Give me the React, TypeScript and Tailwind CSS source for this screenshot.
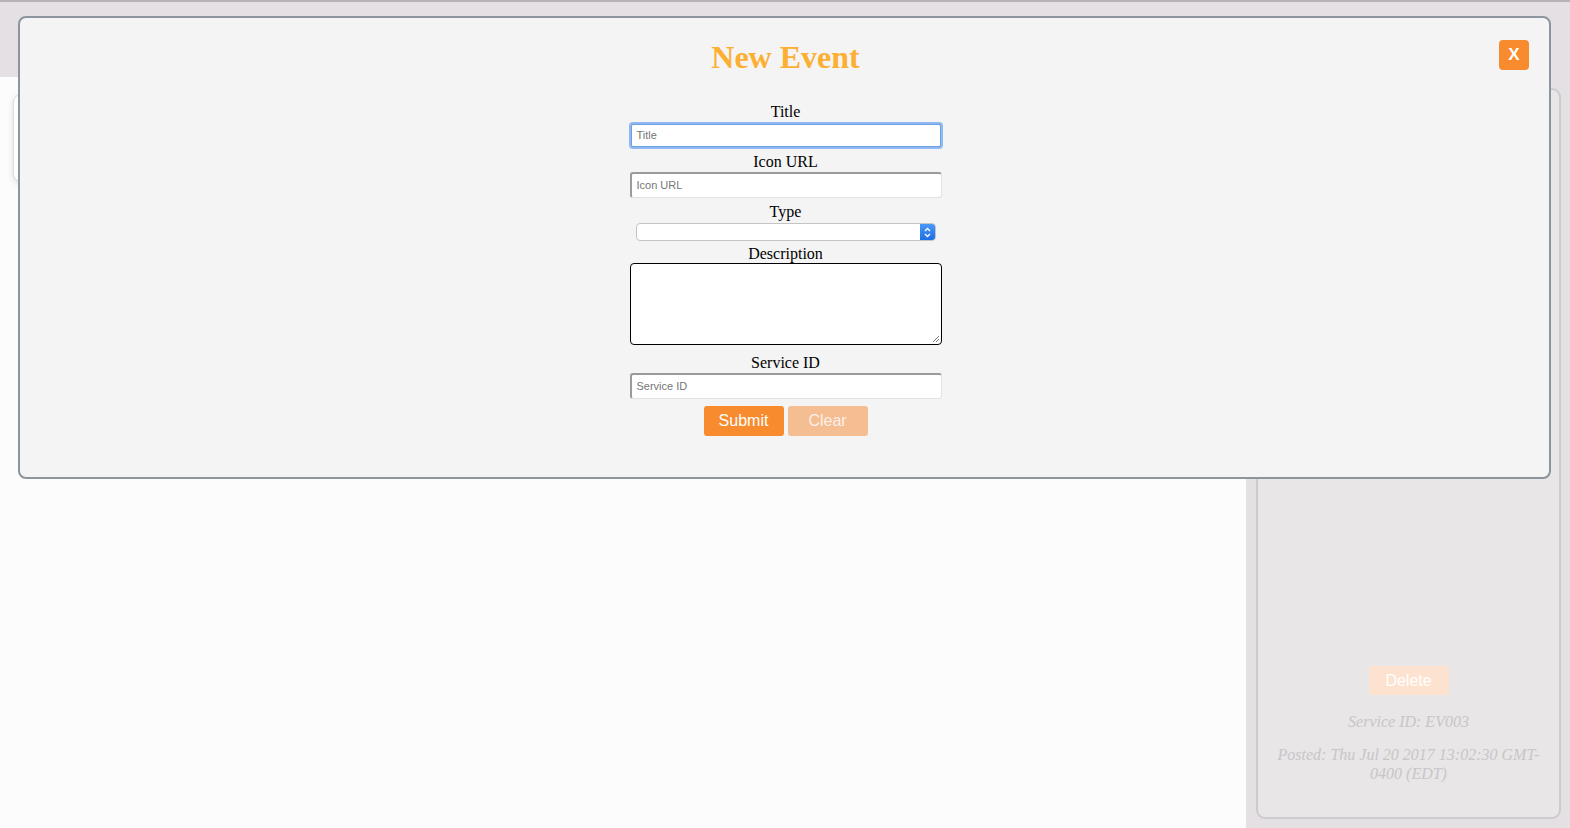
import React from "react";

const serif = { fontFamily: '"Liberation Serif", "Times New Roman", serif' };

function TextInput({ placeholder, focused }: { placeholder: string; focused?: boolean }) {
  if (focused) {
    return (
      <div className="w-[314px] h-[27px] rounded-[4px] p-[2px] bg-[#8fb9f2]">
        <div className="w-full h-full bg-white border border-[#6e9fe0] rounded-[2px] flex items-center pl-[5px]">
          <span className="text-[11px] text-[#767676]" style={{ fontFamily: '"Liberation Sans", Arial, sans-serif' }}>
            {placeholder}
          </span>
        </div>
      </div>
    );
  }
  return (
    <div className="w-[312px] h-[26px] bg-white rounded-[3px] border-t-2 border-l-2 border-r border-b border-t-[#9a9a9a] border-l-[#9a9a9a] border-r-[#e2e2e2] border-b-[#e2e2e2] flex items-center pl-[5px]">
      <span className="text-[11px] text-[#767676]" style={{ fontFamily: '"Liberation Sans", Arial, sans-serif' }}>
        {placeholder}
      </span>
    </div>
  );
}

function Label({ children }: { children: React.ReactNode }) {
  return (
    <div className="text-[16px] leading-[18px] text-black" style={serif}>
      {children}
    </div>
  );
}

export default function App() {
  return (
    <div className="relative w-[1570px] h-[828px] overflow-hidden bg-[#fcfcfc]">
      {/* Background page */}
      <div className="flex flex-col h-full">
        <div className="h-[77px] bg-[#e5e0e3] border-t-2 border-t-[#b7b2b6]" />
        <div className="flex flex-1">
          <div className="flex-1 bg-[#fcfcfc] pl-[13px] pt-[17px]">
            <div className="w-[600px] h-[88px] bg-white border border-[#dddddd] rounded-[8px] shadow-[0_2px_6px_rgba(0,0,0,0.12)]" />
          </div>
          <div className="w-[324px] bg-[#e5e0e3] pl-[10px] pr-[9px] pt-[11px] pb-[9px] flex">
            <div className="flex-1 bg-[#e8e6e7] border-2 border-[#cdcbcc] rounded-[9px] flex flex-col items-center justify-end pb-[34px]">
              <div
                className="w-[80px] h-[29px] bg-[#fde3cf] rounded-[3px] flex items-center justify-center text-white text-[16px]"
                style={{ fontFamily: '"Liberation Sans", Arial, sans-serif' }}
              >
                Delete
              </div>
              <div className="mt-[17px] text-[16px] italic text-[#c9c5c7] leading-[19px]" style={serif}>
                Service ID: EV003
              </div>
              <div className="mt-[14px] w-[280px] text-center text-[16px] italic text-[#c9c5c7] leading-[19px]" style={serif}>
                Posted: Thu Jul 20 2017 13:02:30 GMT-0400 (EDT)
              </div>
            </div>
          </div>
        </div>
      </div>

      {/* Modal overlay */}
      <div className="absolute left-[18px] top-[16px] w-[1533px] h-[463px] bg-[#f4f4f4] border-2 border-[#8c959e] rounded-[8px]">
        <div
          className="absolute right-[20px] top-[22px] w-[30px] h-[30px] bg-[#f88b2e] rounded-[4px] flex items-center justify-center text-white text-[17px] font-bold"
          style={{ fontFamily: '"Liberation Sans", Arial, sans-serif' }}
        >
          X
        </div>
        <div className="flex flex-col items-center pt-[21px] pl-[2px]">
          <h1 className="text-[32px] leading-[37px] font-bold text-[#fbb034]" style={serif}>
            New Event
          </h1>
          <div className="mt-[27px]">
            <Label>Title</Label>
          </div>
          <div className="mt-[1px]">
            <TextInput placeholder="Title" focused />
          </div>
          <div className="mt-[4px]">
            <Label>Icon URL</Label>
          </div>
          <div className="mt-[1px]">
            <TextInput placeholder="Icon URL" />
          </div>
          <div className="mt-[5px]">
            <Label>Type</Label>
          </div>
          <div className="mt-[2px] w-[300px] h-[18px] bg-white border border-[#c4c4c4] rounded-[4px] flex justify-end overflow-hidden">
            <div className="w-[15px] h-full bg-gradient-to-b from-[#4a98f7] to-[#1d6ee6] flex items-center justify-center">
              <svg width="7" height="11" viewBox="0 0 7 11" fill="none">
                <path d="M1 4 L3.5 1.5 L6 4" stroke="white" strokeWidth="1.3" />
                <path d="M1 7 L3.5 9.5 L6 7" stroke="white" strokeWidth="1.3" />
              </svg>
            </div>
          </div>
          <div className="mt-[4px]">
            <Label>Description</Label>
          </div>
          <div className="relative w-[312px] h-[82px] bg-white border border-black rounded-[4px]">
            <svg className="absolute right-[1px] bottom-[1px]" width="8" height="8" viewBox="0 0 8 8">
              <path d="M7 1 L1 7 M7 4 L4 7" stroke="#777" strokeWidth="1" />
            </svg>
          </div>
          <div className="mt-[9px]">
            <Label>Service ID</Label>
          </div>
          <div className="mt-[1px]">
            <TextInput placeholder="Service ID" />
          </div>
          <div className="mt-[7px] flex gap-[4px]" style={{ fontFamily: '"Liberation Sans", Arial, sans-serif' }}>
            <div className="w-[80px] h-[30px] bg-[#f88b2e] rounded-[3px] flex items-center justify-center text-white text-[16px]">
              Submit
            </div>
            <div className="w-[80px] h-[30px] bg-[#f5bd92] rounded-[3px] flex items-center justify-center text-[#fcefe6] text-[16px]">
              Clear
            </div>
          </div>
        </div>
      </div>
    </div>
  );
}
